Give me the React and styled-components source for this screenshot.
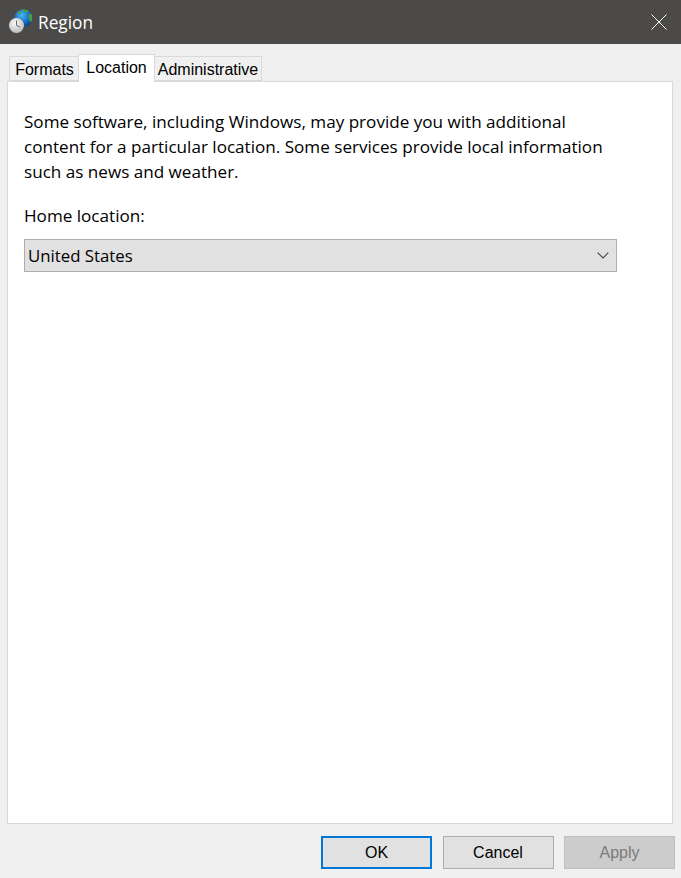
import React from "react"
import styled, { createGlobalStyle } from "styled-components"

const GlobalStyle = createGlobalStyle`
  html, body {
    margin: 0;
    padding: 0;
    background: #f0f0f0;
  }
`

const Dialog = styled.div`
  width: 681px;
  height: 878px;
  display: flex;
  flex-direction: column;
  background: #f0f0f0;
  overflow: hidden;
`

const TitleBar = styled.header`
  height: 44px;
  flex: none;
  display: flex;
  align-items: center;
  padding: 0 14px 0 9px;
  background: #4c4a48;
  color: #fff;
`

const Title = styled.span`
  margin-left: 5px;
  font-family: "Open Sans", sans-serif;
  font-size: 17.3px;
`

const CloseButton = styled.button`
  margin-left: auto;
  padding: 0;
  width: 16px;
  height: 16px;
  display: block;
  border: 0;
  background: none;
  line-height: 0;
`

const Tabs = styled.div`
  height: 37px;
  flex: none;
  display: flex;
  align-items: flex-end;
  padding-left: 9px;
`

const Tab = styled.div`
  box-sizing: border-box;
  width: ${p => p.$width}px;
  height: ${p => (p.$active ? 28 : 25)}px;
  margin-bottom: ${p => (p.$active ? -1 : 0)}px;
  padding-top: 3px;
  padding-left: ${p => (p.$first ? 1 : 0)}px;
  border: 1px solid #d9d9d9;
  border-bottom: ${p => (p.$active ? "0" : "1px solid #d9d9d9")};
  border-left: ${p => (p.$active || p.$first ? "1px solid #d9d9d9" : "0")};
  border-right: ${p => (p.$first ? "0" : "1px solid #d9d9d9")};
  background: ${p => (p.$active ? "#fff" : "#f0f0f0")};
  position: relative;
  z-index: ${p => (p.$active ? 1 : 0)};
  text-align: center;
  font-family: "Liberation Sans", sans-serif;
  font-size: 16px;
  line-height: 19px;
  color: #000;
  white-space: nowrap;
`

const Panel = styled.main`
  box-sizing: border-box;
  width: 666px;
  height: 743px;
  margin-left: 7px;
  flex: none;
  padding: 27px 16px 0;
  border: 1px solid #d9d9d9;
  background: #fff;
  color: #000;
  font-family: "Open Sans", sans-serif;
  font-size: 17.1px;
`

const Description = styled.p`
  margin: 0;
  width: 590px;
  line-height: 25px;
`

const FieldLabel = styled.label`
  display: block;
  margin-top: 19px;
  line-height: 25px;
`

const Select = styled.div`
  box-sizing: border-box;
  width: 593px;
  height: 33px;
  margin-top: 11px;
  padding: 0 7px 0 3px;
  display: flex;
  align-items: center;
  justify-content: space-between;
  border: 1px solid #adadad;
  background: #e1e1e1;
  font-size: 16.8px;
`

const Footer = styled.footer`
  flex: 1;
  display: flex;
  justify-content: flex-end;
  gap: 10.5px;
  padding: 12px 6px 0 0;
`

const Button = styled.button`
  box-sizing: border-box;
  width: 111px;
  height: 33px;
  padding: 0;
  border: ${p => (p.$primary ? "2px solid #0078d7" : p.disabled ? "1px solid #bfbfbf" : "1px solid #adadad")};
  background: ${p => (p.disabled ? "#cccccc" : "#e1e1e1")};
  color: ${p => (p.disabled ? "#7a7a7a" : "#000")};
  font-family: "Liberation Sans", sans-serif;
  font-size: 16px;
`

const RegionIcon = () => (
  <svg width="24" height="26" viewBox="0 0 24 26">
    <defs>
      <radialGradient id="globe" cx="40%" cy="35%" r="70%">
        <stop offset="0%" stopColor="#4db8f0" />
        <stop offset="65%" stopColor="#1468c0" />
        <stop offset="100%" stopColor="#0c3d80" />
      </radialGradient>
      <radialGradient id="clock" cx="40%" cy="35%" r="75%">
        <stop offset="0%" stopColor="#f8f8f8" />
        <stop offset="100%" stopColor="#b4b4b4" />
      </radialGradient>
      <clipPath id="globeClip">
        <circle cx="14.500" cy="9" r="8.800" />
      </clipPath>
    </defs>
    <circle cx="14.500" cy="9" r="8.800" fill="url(#globe)" />
    <g clipPath="url(#globeClip)" fill="#46a040">
      <path d="M13 0h6l1 2c-1 1.500-3 1.500-4 1s-2.500 0-3-3z" />
      <path d="M20 5c1.500-.5 3 0 4 1v6l-3 1c-1-2-1.500-5-1-8z" />
      <path d="M9 3c1.500-1 3-.5 3 .5s-1 2-2 1.500-1.500-1-1-2z" />
    </g>
    <circle cx="7.500" cy="16.500" r="7.500" fill="url(#clock)" />
    <path d="M7.500 11.500v5l3.500 1.500" fill="none" stroke="#6a6a6a" strokeWidth="1" />
  </svg>
)

const CloseIcon = () => (
  <svg width="16" height="16" viewBox="0 0 16 16">
    <path d="M.5.500l15 15M15.500.500l-15 15" fill="none" stroke="#fff" strokeWidth="1" />
  </svg>
)

const ChevronIcon = () => (
  <svg width="12" height="7" viewBox="0 0 12 7">
    <path d="M.7.700L6 6l5.300-5.300" fill="none" stroke="#444" strokeWidth="1.100" />
  </svg>
)

const App = () => (
  <Dialog>
    <GlobalStyle />
    <TitleBar>
      <RegionIcon />
      <Title>Region</Title>
      <CloseButton aria-label="Close">
        <CloseIcon />
      </CloseButton>
    </TitleBar>
    <Tabs>
      <Tab $first $width={69}>Formats</Tab>
      <Tab $active $width={77}>Location</Tab>
      <Tab $width={107}>Administrative</Tab>
    </Tabs>
    <Panel>
      <Description>
        Some software, including Windows, may provide you with additional
        content for a particular location. Some services provide local
        information such as news and weather.
      </Description>
      <FieldLabel>Home location:</FieldLabel>
      <Select>
        United States
        <ChevronIcon />
      </Select>
    </Panel>
    <Footer>
      <Button $primary>OK</Button>
      <Button>Cancel</Button>
      <Button disabled>Apply</Button>
    </Footer>
  </Dialog>
)

export default App
